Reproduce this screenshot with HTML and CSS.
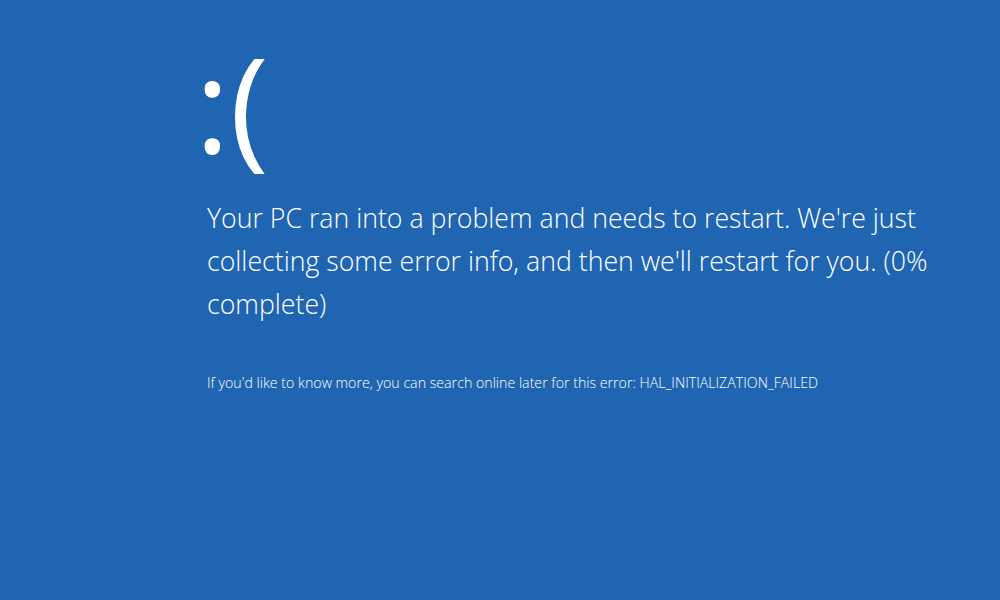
FILE: index.html
```html
<!DOCTYPE html>
<html>
<head>
<meta charset="utf-8">
<link rel="stylesheet" href="styles.css">
</head>
<body>
<main class="screen">
  <div class="face">:(</div>
  <p class="message">Your PC ran into a problem and needs to restart. We're just collecting some error info, and then we'll restart for you. (0% complete)</p>
  <p class="info">If you'd like to know more, you can search online later for this error: HAL_INITIALIZATION_FAILED</p>
</main>
</body>
</html>
```

FILE: styles.css
```css
html, body {
  margin: 0;
  padding: 0;
  background: #1f65b1;
}
.screen {
  width: 1000px;
  height: 600px;
  box-sizing: border-box;
  padding: 36px 0 0 207px;
  color: #ffffff;
  font-family: "Open Sans", "Noto Sans", sans-serif;
  font-weight: 300;
}
.face {
  font-size: 132px;
  line-height: 132px;
  font-weight: 400;
  margin-left: -12px;
}
.message {
  margin: 28px 0 0 0;
  width: 760px;
  font-size: 26.7px;
  line-height: 43px;
}
.info {
  margin: 49px 0 0 0;
  font-size: 14.2px;
  line-height: 18px;
}
```
